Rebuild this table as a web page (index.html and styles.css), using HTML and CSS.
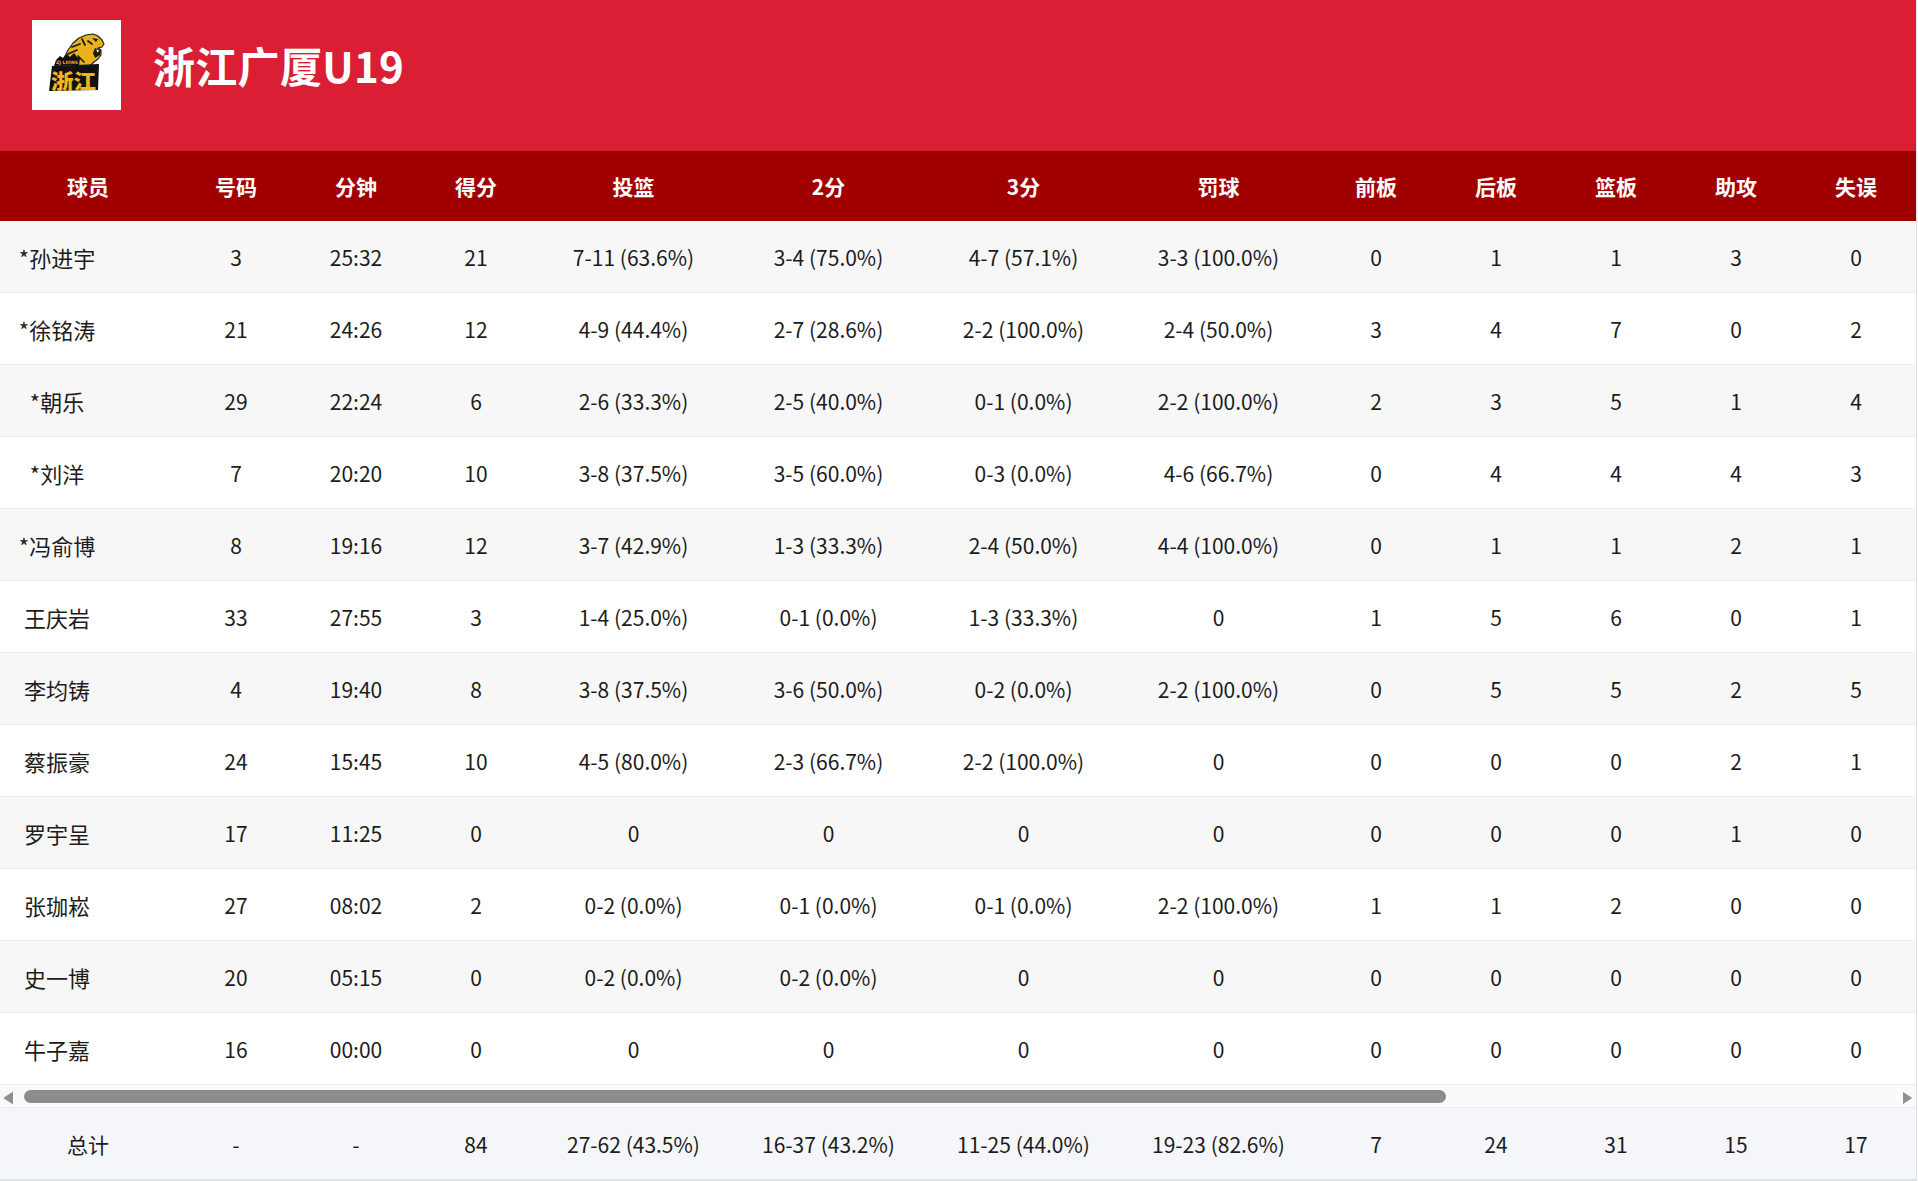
FILE: index.html
```html
<!DOCTYPE html>
<html lang="zh-CN">
<head>
<meta charset="utf-8">
<title>浙江广厦U19 球员数据</title>
<link rel="stylesheet" href="styles.css">
</head>
<body>
<div class="page">
  <header class="team-bar">
    <div class="logo">
      <svg class="logo-svg" viewBox="0 0 89 90" width="89" height="90" aria-label="浙江 ZJ LIONS">
        <!-- tiger head -->
        <path d="M30 46 L32 38 L36 30 L41 23 L47 18 L54 15 L61 14 L66 16 L70 20 L72 24 L70 27 L66 28 L69 30 L69 35 L66 39 L62 42 L58 46 L52 49 L40 49 Z" fill="#e9b11b" stroke="#1a1a1a" stroke-width="1.1" stroke-linejoin="round"/>
        <path d="M40 27 L48 24 M36 34 L45 30 M34 41 L43 37 M50 19 L53 25 M46 36 L52 42 M56 21 L60 24" stroke="#1a1a1a" stroke-width="1.7" fill="none" stroke-linecap="round"/>
        <path d="M60 18 L66 19 L64 22 Z" fill="#1a1a1a"/>
        <path d="M63 28 L69 30 L68 35 L63 38 L61 33 Z" fill="#1a1a1a"/>
        <path d="M64 29.5 L67.5 30.5 L65.5 32.5 Z" fill="#f4f0e0"/>
        <!-- mountains + ZJ LIONS band -->
        <path d="M24 40 L28 36 L31 38 L35 34 L38 37 L42 33 L45 37 L48 38 L47 45 L22 46 Z" fill="#111"/>
        <text x="24" y="43.6" class="logo-small" textLength="22" lengthAdjust="spacingAndGlyphs">ZJ LIONS</text>
        <!-- 浙江 plate -->
        <path d="M20 46 L67 44 L66 70 L17 71 Z" fill="#111"/>
        <text x="19" y="68.5" class="logo-big" textLength="45" lengthAdjust="spacingAndGlyphs">浙江</text>
      </svg>
    </div>
    <h1 class="team-name">浙江广厦U19</h1>
  </header>

  <div class="stats">
    <div class="row head">
      <div class="cell player">球员</div>
      <div class="cell">号码</div>
      <div class="cell">分钟</div>
      <div class="cell">得分</div>
      <div class="cell">投篮</div>
      <div class="cell">2分</div>
      <div class="cell">3分</div>
      <div class="cell">罚球</div>
      <div class="cell">前板</div>
      <div class="cell">后板</div>
      <div class="cell">篮板</div>
      <div class="cell">助攻</div>
      <div class="cell">失误</div>
    </div>

    <div class="row">
      <div class="cell player"><span class="pname">*孙进宇</span></div>
      <div class="cell">3</div><div class="cell">25:32</div><div class="cell">21</div>
      <div class="cell">7-11 (63.6%)</div><div class="cell">3-4 (75.0%)</div><div class="cell">4-7 (57.1%)</div><div class="cell">3-3 (100.0%)</div>
      <div class="cell">0</div><div class="cell">1</div><div class="cell">1</div><div class="cell">3</div><div class="cell">0</div>
    </div>
    <div class="row">
      <div class="cell player"><span class="pname">*徐铭涛</span></div>
      <div class="cell">21</div><div class="cell">24:26</div><div class="cell">12</div>
      <div class="cell">4-9 (44.4%)</div><div class="cell">2-7 (28.6%)</div><div class="cell">2-2 (100.0%)</div><div class="cell">2-4 (50.0%)</div>
      <div class="cell">3</div><div class="cell">4</div><div class="cell">7</div><div class="cell">0</div><div class="cell">2</div>
    </div>
    <div class="row">
      <div class="cell player"><span class="pname">*朝乐</span></div>
      <div class="cell">29</div><div class="cell">22:24</div><div class="cell">6</div>
      <div class="cell">2-6 (33.3%)</div><div class="cell">2-5 (40.0%)</div><div class="cell">0-1 (0.0%)</div><div class="cell">2-2 (100.0%)</div>
      <div class="cell">2</div><div class="cell">3</div><div class="cell">5</div><div class="cell">1</div><div class="cell">4</div>
    </div>
    <div class="row">
      <div class="cell player"><span class="pname">*刘洋</span></div>
      <div class="cell">7</div><div class="cell">20:20</div><div class="cell">10</div>
      <div class="cell">3-8 (37.5%)</div><div class="cell">3-5 (60.0%)</div><div class="cell">0-3 (0.0%)</div><div class="cell">4-6 (66.7%)</div>
      <div class="cell">0</div><div class="cell">4</div><div class="cell">4</div><div class="cell">4</div><div class="cell">3</div>
    </div>
    <div class="row">
      <div class="cell player"><span class="pname">*冯俞博</span></div>
      <div class="cell">8</div><div class="cell">19:16</div><div class="cell">12</div>
      <div class="cell">3-7 (42.9%)</div><div class="cell">1-3 (33.3%)</div><div class="cell">2-4 (50.0%)</div><div class="cell">4-4 (100.0%)</div>
      <div class="cell">0</div><div class="cell">1</div><div class="cell">1</div><div class="cell">2</div><div class="cell">1</div>
    </div>
    <div class="row">
      <div class="cell player"><span class="pname">王庆岩</span></div>
      <div class="cell">33</div><div class="cell">27:55</div><div class="cell">3</div>
      <div class="cell">1-4 (25.0%)</div><div class="cell">0-1 (0.0%)</div><div class="cell">1-3 (33.3%)</div><div class="cell">0</div>
      <div class="cell">1</div><div class="cell">5</div><div class="cell">6</div><div class="cell">0</div><div class="cell">1</div>
    </div>
    <div class="row">
      <div class="cell player"><span class="pname">李均铸</span></div>
      <div class="cell">4</div><div class="cell">19:40</div><div class="cell">8</div>
      <div class="cell">3-8 (37.5%)</div><div class="cell">3-6 (50.0%)</div><div class="cell">0-2 (0.0%)</div><div class="cell">2-2 (100.0%)</div>
      <div class="cell">0</div><div class="cell">5</div><div class="cell">5</div><div class="cell">2</div><div class="cell">5</div>
    </div>
    <div class="row">
      <div class="cell player"><span class="pname">蔡振豪</span></div>
      <div class="cell">24</div><div class="cell">15:45</div><div class="cell">10</div>
      <div class="cell">4-5 (80.0%)</div><div class="cell">2-3 (66.7%)</div><div class="cell">2-2 (100.0%)</div><div class="cell">0</div>
      <div class="cell">0</div><div class="cell">0</div><div class="cell">0</div><div class="cell">2</div><div class="cell">1</div>
    </div>
    <div class="row">
      <div class="cell player"><span class="pname">罗宇呈</span></div>
      <div class="cell">17</div><div class="cell">11:25</div><div class="cell">0</div>
      <div class="cell">0</div><div class="cell">0</div><div class="cell">0</div><div class="cell">0</div>
      <div class="cell">0</div><div class="cell">0</div><div class="cell">0</div><div class="cell">1</div><div class="cell">0</div>
    </div>
    <div class="row">
      <div class="cell player"><span class="pname">张珈崧</span></div>
      <div class="cell">27</div><div class="cell">08:02</div><div class="cell">2</div>
      <div class="cell">0-2 (0.0%)</div><div class="cell">0-1 (0.0%)</div><div class="cell">0-1 (0.0%)</div><div class="cell">2-2 (100.0%)</div>
      <div class="cell">1</div><div class="cell">1</div><div class="cell">2</div><div class="cell">0</div><div class="cell">0</div>
    </div>
    <div class="row">
      <div class="cell player"><span class="pname">史一博</span></div>
      <div class="cell">20</div><div class="cell">05:15</div><div class="cell">0</div>
      <div class="cell">0-2 (0.0%)</div><div class="cell">0-2 (0.0%)</div><div class="cell">0</div><div class="cell">0</div>
      <div class="cell">0</div><div class="cell">0</div><div class="cell">0</div><div class="cell">0</div><div class="cell">0</div>
    </div>
    <div class="row">
      <div class="cell player"><span class="pname">牛子嘉</span></div>
      <div class="cell">16</div><div class="cell">00:00</div><div class="cell">0</div>
      <div class="cell">0</div><div class="cell">0</div><div class="cell">0</div><div class="cell">0</div>
      <div class="cell">0</div><div class="cell">0</div><div class="cell">0</div><div class="cell">0</div><div class="cell">0</div>
    </div>
  </div>

  <div class="scrollbar" aria-hidden="true">
    <svg class="sb-arrow" viewBox="0 0 17 23" width="17" height="23"><path d="M13 6.5 L13 19.5 L4 13.5 Q3 13 4 12.5 Z" fill="#8f8f8f"/></svg>
    <div class="sb-track"><div class="sb-thumb"></div></div>
    <svg class="sb-arrow" viewBox="0 0 17 23" width="17" height="23"><path d="M4 7 L4 19 L12.5 13.5 Q13.5 13 12.5 12.5 Z" fill="#8f8f8f"/></svg>
  </div>

  <div class="row total">
    <div class="cell">总计</div>
    <div class="cell">-</div><div class="cell">-</div><div class="cell">84</div>
    <div class="cell">27-62 (43.5%)</div><div class="cell">16-37 (43.2%)</div><div class="cell">11-25 (44.0%)</div><div class="cell">19-23 (82.6%)</div>
    <div class="cell">7</div><div class="cell">24</div><div class="cell">31</div><div class="cell">15</div><div class="cell">17</div>
  </div>
</div>
</body>
</html>
```

FILE: styles.css
```css
html, body {
  margin: 0;
  padding: 0;
  background: #ffffff;
}

body {
  font-family: "Noto Sans CJK SC", "Noto Sans", "Liberation Sans", sans-serif;
  color: #1c1c1c;
}

.page {
  width: 1916px;
  border-right: 1px solid #dfe3e8;
}

/* ---------- team bar ---------- */
.team-bar {
  height: 151px;
  box-sizing: border-box;
  background: #da1f34;
  display: flex;
  align-items: flex-start;
  gap: 32px;
  padding: 20px 0 0 32px;
}

.logo {
  width: 89px;
  height: 90px;
  background: #ffffff;
  flex: none;
}

.logo-svg {
  display: block;
}

.logo-small {
  font-family: "DejaVu Sans", sans-serif;
  font-size: 4.5px;
  font-weight: 700;
  fill: #e9b11b;
}

.logo-big {
  font-family: "Noto Sans CJK SC", sans-serif;
  font-size: 20px;
  font-weight: 900;
  fill: #f0b619;
}

.team-name {
  margin: 0;
  height: 90px;
  line-height: 90px;
  font-size: 42px;
  font-weight: 700;
  color: #ffffff;
  letter-spacing: 0.3px;
}

/* ---------- stats grid ---------- */
.row {
  display: grid;
  grid-template-columns: 176px 120px 120px 120px 195px 195px 195px 195px 120px 120px 120px 120px 120px;
  height: 72px;
  box-sizing: border-box;
  border-bottom: 1px solid #ebebf0;
  font-size: 21px;
}

.stats .row:nth-child(even) {
  background: #f7f7f7;
}

.stats .row:nth-child(odd) {
  background: #ffffff;
}

.stats .row.head {
  height: 70px;
  background: #a10000;
  border-bottom: none;
  color: #ffffff;
  font-size: 21px;
  font-weight: 700;
}

.cell {
  display: flex;
  align-items: center;
  justify-content: center;
  white-space: nowrap;
}

.stats .row:not(.head) .cell.player {
  padding-right: 62px;
  font-size: 22px;
}

/* ---------- scrollbar ---------- */
.scrollbar {
  height: 23px;
  box-sizing: border-box;
  display: flex;
  align-items: stretch;
  background: #fafafa;
  border-bottom: 1px solid #e8ebef;
}

.sb-arrow {
  flex: none;
  display: block;
}

.sb-track {
  flex: 1;
  padding: 5px 7px 0;
}

.sb-thumb {
  width: 1422px;
  height: 13px;
  border-radius: 7px;
  background: #8c8c8c;
}

/* ---------- totals ---------- */
.row.total {
  height: 73px;
  background: #f5f6fa;
  border-bottom: 2px solid #dde2e7;
  font-size: 21px;
}
```
